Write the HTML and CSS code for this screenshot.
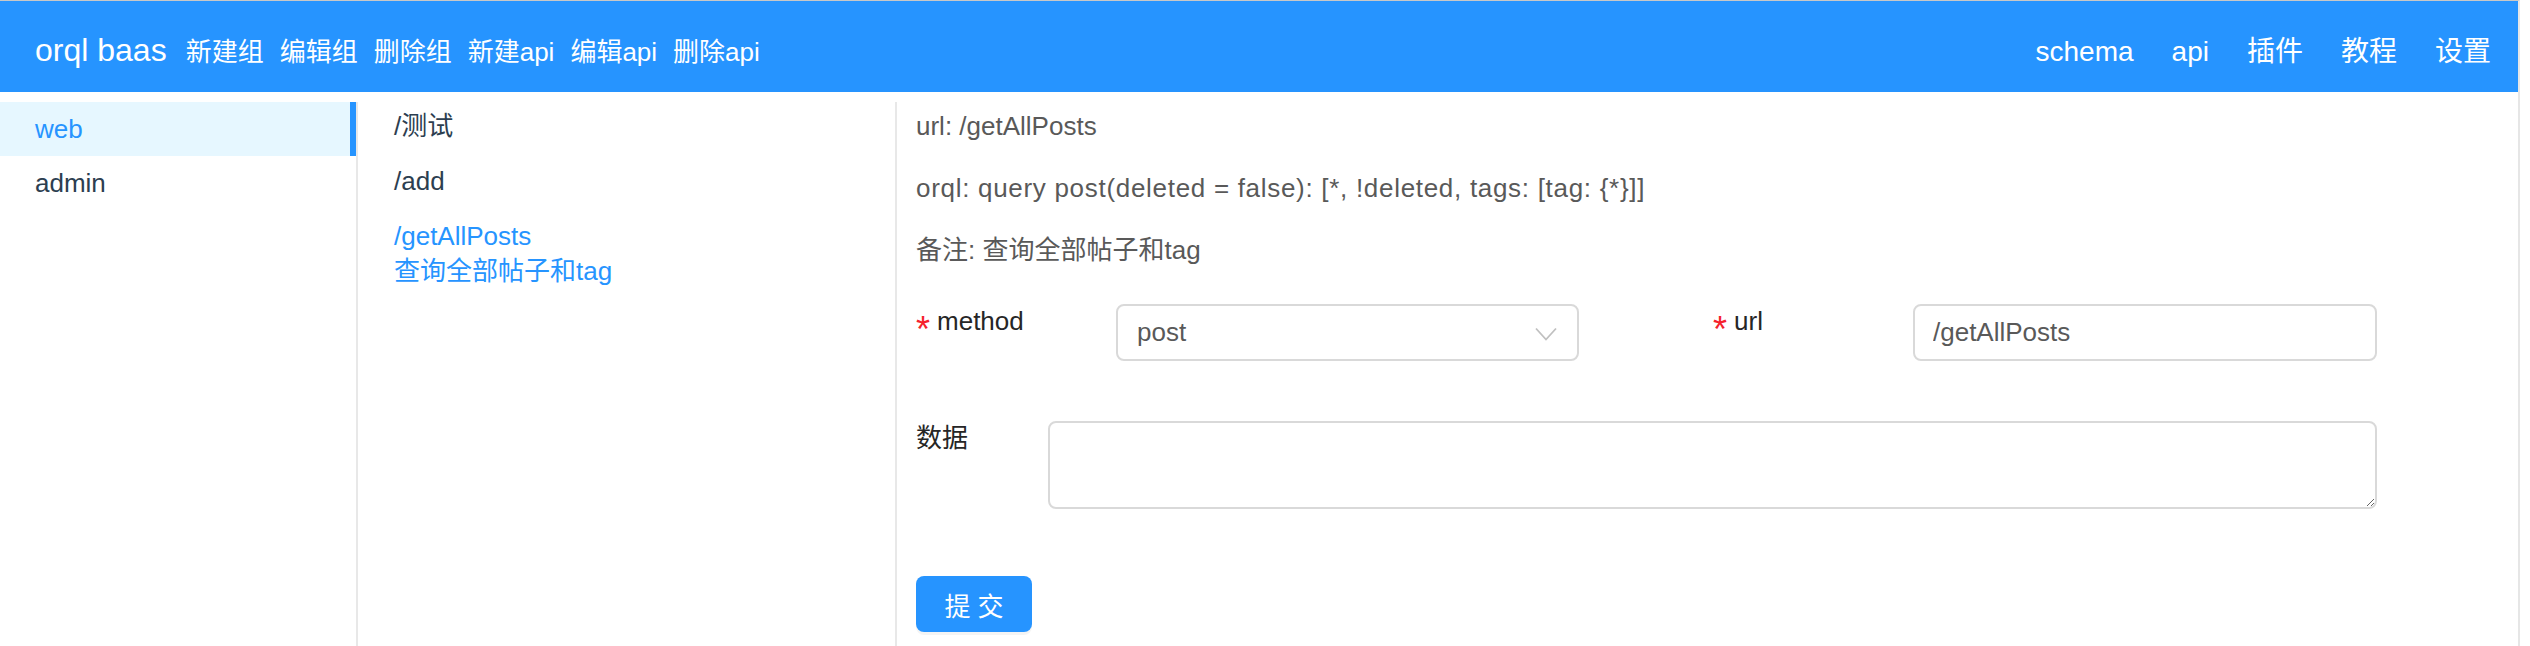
FILE: index.html
```html
<!DOCTYPE html>
<html lang="zh-CN">
<head>
<meta charset="utf-8">
<title>orql baas</title>
<link rel="stylesheet" href="styles.css">
</head>
<body>
<div class="window">
  <header class="topbar">
    <div class="brand">orql baas</div>
    <nav class="actions">
      <a class="action">新建组</a>
      <a class="action">编辑组</a>
      <a class="action">删除组</a>
      <a class="action">新建api</a>
      <a class="action">编辑api</a>
      <a class="action">删除api</a>
    </nav>
    <nav class="right-nav">
      <a class="nav-item">schema</a>
      <a class="nav-item">api</a>
      <a class="nav-item">插件</a>
      <a class="nav-item">教程</a>
      <a class="nav-item">设置</a>
    </nav>
  </header>
  <main class="layout">
    <aside class="groups">
      <div class="group active">web</div>
      <div class="group">admin</div>
    </aside>
    <section class="apis">
      <div class="api">/测试</div>
      <div class="api">/add</div>
      <div class="api selected">/getAllPosts<br>查询全部帖子和tag</div>
    </section>
    <section class="detail">
      <p class="info">url: /getAllPosts</p>
      <p class="info info-query">orql: query post(deleted = false): [*, !deleted, tags: [tag: {*}]]</p>
      <p class="info">备注: 查询全部帖子和tag</p>
      <form class="form">
        <div class="form-row">
          <div class="field field-half">
            <label class="label label-wide"><span class="req">*</span>method</label>
            <div class="select">
              <span class="select-value">post</span>
              <svg class="chevron" width="22" height="14" viewBox="0 0 22 14"><path d="M1 1.5 L11 12.5 L21 1.5" fill="none" stroke="#c0c0c0" stroke-width="1.8"/></svg>
            </div>
          </div>
          <div class="field field-half">
            <label class="label label-wide"><span class="req">*</span>url</label>
            <input class="input" type="text" value="/getAllPosts">
          </div>
        </div>
        <div class="form-row row-data">
          <div class="field">
            <label class="label label-narrow">数据</label>
            <textarea class="textarea"></textarea>
          </div>
        </div>
        <button class="submit" type="button">提 交</button>
      </form>
    </section>
  </main>
</div>
</body>
</html>
```
FILE: styles.css
```css
* { box-sizing: border-box; }
html, body { margin: 0; padding: 0; background: #ffffff; }
body {
  font-family: "Liberation Sans", "Noto Sans CJK SC", sans-serif;
  width: 2530px;
  height: 646px;
  overflow: hidden;
}
.window {
  width: 2520px;
  height: 646px;
  border-top: 1px solid #c8c8c8;
  border-right: 2px solid #e6e6e6;
  display: flex;
  flex-direction: column;
}
.topbar {
  height: 91px;
  flex: none;
  background: #2694ff;
  color: #ffffff;
  display: flex;
  align-items: baseline;
  padding: 33px 27px 0 35px;
}
.brand { font-size: 32px; line-height: 1; margin-right: 19px; }
.actions { display: flex; gap: 16px; }
.action { font-size: 26px; line-height: 1; color: #ffffff; }
.right-nav { margin-left: auto; display: flex; gap: 38px; }
.nav-item { font-size: 28px; line-height: 1; color: #ffffff; }

.layout {
  flex: 1;
  margin-top: 10px;
  display: flex;
  min-height: 0;
}
.groups {
  width: 358px;
  flex: none;
  border-right: 2px solid #e8e8e8;
}
.group {
  height: 54px;
  line-height: 54px;
  padding-left: 35px;
  font-size: 26px;
  color: #2c3e50;
}
.group.active {
  background: #e6f7ff;
  color: #2694ff;
  box-shadow: inset -6px 0 0 #2694ff;
}
.apis {
  width: 539px;
  flex: none;
  border-right: 2px solid #e8e8e8;
  padding: 7px 0 0 36px;
}
.api {
  font-size: 26px;
  line-height: 35px;
  padding-bottom: 20px;
  color: #2c3e50;
}
.api.selected { color: #2694ff; }

.detail {
  flex: 1;
  padding: 6px 0 0 19px;
}
.info {
  margin: 0 0 26px;
  font-size: 26px;
  line-height: 36px;
  color: #595959;
}
.info-query { letter-spacing: 0.7px; }
.form { margin-top: 36px; }
.form-row { display: flex; }
.field { display: flex; align-items: flex-start; }
.field-half { width: 797px; }
.label {
  font-size: 26px;
  line-height: 34px;
  color: #262626;
  flex: none;
}
.label-wide { width: 200px; }
.label-narrow { width: 132px; }
.req {
  color: #f5222d;
  font-size: 36px;
  margin-right: 7px;
  vertical-align: -12px;
}
.select {
  width: 463px;
  height: 57px;
  border: 2px solid #d9d9d9;
  border-radius: 8px;
  display: flex;
  align-items: center;
  justify-content: space-between;
  padding: 0 20px 0 19px;
  font-size: 26px;
  color: #595959;
}
.chevron { display: block; margin-top: 3px; }
.input {
  width: 464px;
  height: 57px;
  border: 2px solid #d9d9d9;
  border-radius: 8px;
  padding: 0 18px;
  font-family: inherit;
  font-size: 26px;
  color: #595959;
  outline: none;
}
.row-data { margin-top: 60px; }
.textarea {
  width: 1329px;
  height: 88px;
  border: 2px solid #d9d9d9;
  border-radius: 8px;
  font-family: inherit;
  font-size: 26px;
  display: block;
  outline: none;
}
.submit {
  margin-top: 67px;
  width: 116px;
  height: 56px;
  border: none;
  border-radius: 8px;
  background: #2694ff;
  color: #ffffff;
  font-family: inherit;
  font-size: 26px;
  box-shadow: 0 3px 0 rgba(0, 0, 0, 0.045);
  display: block;
}
```
